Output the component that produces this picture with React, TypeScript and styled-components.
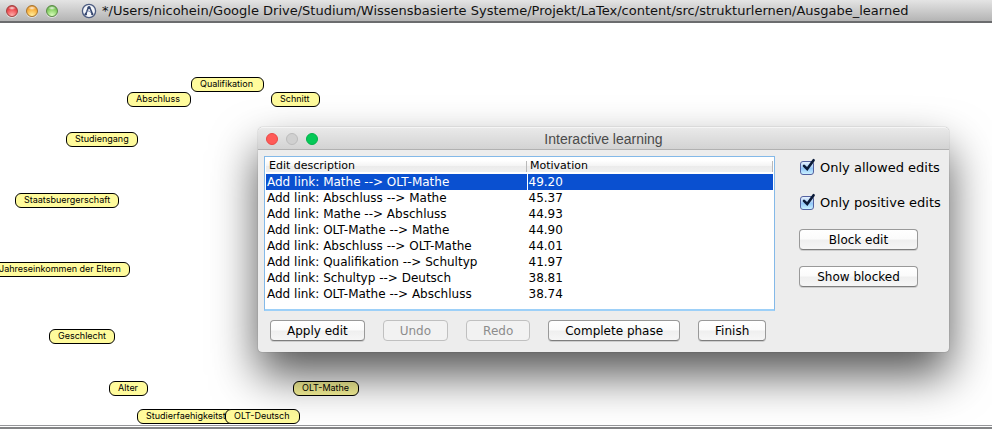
import React, { useState } from "react";
import styled, { createGlobalStyle } from "styled-components";

const uiFont = `"DejaVu Sans", Verdana, sans-serif`;

const GlobalStyle = createGlobalStyle`
  *, *::before, *::after { box-sizing: border-box; }
  body { margin: 0; background: #fff; color: #000; overflow: hidden; }
`;

const AppWindow = styled.div`
  position: relative;
  display: flex;
  flex-direction: column;
  height: 100vh;
  overflow: hidden;
`;

const TitleBar = styled.header`
  display: flex;
  align-items: center;
  flex: none;
  height: 23px;
  padding: 0 6px;
  border-bottom: 2px solid #6b6c6e;
  background: linear-gradient(#e4e4e4, #b4b4b4);
`;

const Lights = styled.div`
  display: flex;
  gap: 8px;
`;

const GlossyLight = styled.button<{ $rim: string; $top: string; $mid: string; $low: string }>`
  width: 12px;
  height: 12px;
  padding: 0;
  border: 1px solid ${(p) => p.$rim};
  border-radius: 50%;
  background:
    radial-gradient(ellipse 4px 2px at 50% 20%, #fffd, #fff0),
    radial-gradient(circle at 50% 95%, ${(p) => p.$low}, ${(p) => p.$mid} 60%, ${(p) => p.$top});
  box-shadow: 0 1px 0 #fff8;
`;

const FileIcon = styled.svg`
  flex: none;
  width: 16px;
  height: 16px;
  margin: 0 5px 0 23px;
`;

const FileTitle = styled.h1`
  margin: 0;
  font: 400 13px/20px ${uiFont};
  white-space: nowrap;
  color: #111;
`;

const Canvas = styled.main`
  position: relative;
  flex: 1;
  overflow: hidden;
  background: #fff;
`;

const Node = styled.div<{ $x: number; $y: number; $w: number }>`
  position: absolute;
  left: ${(p) => p.$x}px;
  top: ${(p) => p.$y}px;
  width: ${(p) => p.$w}px;
  height: 15px;
  padding-left: 8px;
  border: 1px solid #000;
  border-radius: 6px;
  background: #fffb9c;
  font: 400 9px/11px Inter, "Liberation Sans", sans-serif;
  white-space: nowrap;
`;

const BottomEdge = styled.footer`
  flex: none;
  height: 4px;
  border-top: 1px solid #96979a;
  border-bottom: 2px solid #838486;
  background: #fff;
`;

const Dialog = styled.section`
  position: absolute;
  left: 258px;
  top: 127px;
  width: 691px;
  border-radius: 5px 5px 4px 4px;
  background: #ededed;
  box-shadow: 0 0 1px #0008, 0 23px 46px #000a;
`;

const DialogBar = styled.header`
  display: grid;
  grid-template-columns: 1fr auto 1fr;
  align-items: center;
  height: 23px;
  padding: 0 8px;
  border-top: 1px solid #f5f5f5;
  border-bottom: 1px solid #b1b1b1;
  border-radius: 5px 5px 0 0;
  background: linear-gradient(#e9e9e9, #d3d3d3);
`;

const FlatLight = styled.button<{ $fill: string; $rim: string }>`
  width: 12px;
  height: 12px;
  padding: 0;
  border: 1px solid ${(p) => p.$rim};
  border-radius: 50%;
  background: ${(p) => p.$fill};
`;

const DialogTitle = styled.h2`
  margin: 0;
  font: 400 14px/20px "Liberation Sans", Arial, sans-serif;
  color: #4a4a4a;
`;

const DialogBody = styled.div`
  display: flex;
  gap: 24px;
  padding: 6px 6px 11px;
`;

const EditsColumn = styled.div`
  flex: 1;
`;

const TableFrame = styled.div`
  height: 155px;
  padding: 0 1px;
  border: 1px solid #84b9e8;
  border-bottom: 2px solid #9dd0f8;
  background: #fff;
`;

const EditsTable = styled.table`
  width: 100%;
  table-layout: fixed;
  border-collapse: collapse;
  cursor: default;
`;

const HeadCell = styled.th`
  height: 17px;
  padding: 0 3px;
  background:
    linear-gradient(#b9b9b9, #b9b9b9) right 0 bottom 2px / 1px 11px no-repeat,
    linear-gradient(#fff 20%, #f5f5f5 50%, #ebebeb 51%, #f0f0f0 90%, #fff 91%);
  font: 400 11px/16px ${uiFont};
  text-align: left;

  &:first-child { width: 261px; }
`;

const Row = styled.tr<{ $selected: boolean }>`
  background: ${(p) => (p.$selected ? "#0a50d0" : "transparent")};
  color: ${(p) => (p.$selected ? "#fff" : "#000")};
`;

const Cell = styled.td`
  height: 16px;
  padding: 0 1px;
  font: 400 12px/16px ${uiFont};
  white-space: nowrap;

  & + & { border-left: 1px solid #fff; }
`;

const Actions = styled.div`
  display: flex;
  gap: 18px;
  padding: 9px 6px 0;
`;

const PushButton = styled.button`
  height: 21px;
  padding: 1px 16px 0;
  border: 1px solid #999;
  border-bottom-color: #7d7d7d;
  border-radius: 4px;
  background: linear-gradient(#fff, #fbfbfb 48%, #efefef 52%, #f6f6f6);
  box-shadow: 0 1px 0 #0002;
  color: #000;
  font: 400 12px/18px ${uiFont};
  white-space: nowrap;

  &:disabled {
    border-color: #c0c0c0;
    background: #f2f2f2;
    box-shadow: none;
    color: #8c8c8c;
  }
`;

const OptionsColumn = styled.div`
  display: flex;
  flex-direction: column;
  width: 144px;
`;

const CheckLabel = styled.label`
  display: flex;
  align-items: center;
  gap: 6px;
  height: 20px;
  margin: 2px 0 13px;
  padding-left: 1px;
  font: 400 13px/20px ${uiFont};
  white-space: nowrap;
`;

const CheckWrap = styled.span`
  position: relative;
  display: flex;
`;

const CheckInput = styled.input`
  appearance: none;
  width: 14px;
  height: 14px;
  margin: 0;
  border: 1px solid #5361a0;
  border-radius: 3px;
  background: linear-gradient(#e6f1fd, #a9d0f8 45%, #8fc4f8 50%, #c9f0ff);

  &:not(:checked) + svg { display: none; }
`;

const Tick = styled.svg`
  position: absolute;
  left: 1px;
  top: -3px;
  width: 16px;
  height: 16px;
  pointer-events: none;
`;

const SideButtons = styled.div`
  display: flex;
  flex-direction: column;
  gap: 16px;
  width: 119px;
  margin-top: 3px;
`;

const nodes = [
  { label: "Abschluss", x: 127, y: 69, w: 64 },
  { label: "Qualifikation", x: 191, y: 54, w: 73 },
  { label: "Schnitt", x: 271, y: 69, w: 49 },
  { label: "Studiengang", x: 66, y: 109, w: 72 },
  { label: "Staatsbuergerschaft", x: 15, y: 170, w: 104 },
  { label: "Jahreseinkommen der Eltern", x: -10, y: 239, w: 140 },
  { label: "Geschlecht", x: 49, y: 306, w: 66 },
  { label: "Alter", x: 109, y: 358, w: 39 },
  { label: "Studierfaehigkeitst", x: 137, y: 386, w: 100 },
  { label: "OLT-Deutsch", x: 225, y: 386, w: 75 },
  { label: "OLT-Mathe", x: 293, y: 358, w: 66 },
];

const edits = [
  ["Add link: Mathe --> OLT-Mathe", "49.20"],
  ["Add link: Abschluss --> Mathe", "45.37"],
  ["Add link: Mathe --> Abschluss", "44.93"],
  ["Add link: OLT-Mathe --> Mathe", "44.90"],
  ["Add link: Abschluss --> OLT-Mathe", "44.01"],
  ["Add link: Qualifikation --> Schultyp", "41.97"],
  ["Add link: Schultyp --> Deutsch", "38.81"],
  ["Add link: OLT-Mathe --> Abschluss", "38.74"],
];

function CheckOption({ label }: { label: string }) {
  return (
    <CheckLabel>
      <CheckWrap>
        <CheckInput type="checkbox" defaultChecked />
        <Tick viewBox="0 0 16 16" aria-hidden="true">
          <path d="M3 7.8 L6.2 11 L12.6 2.2" fill="none" stroke="#0b1a38" strokeWidth="2.6" strokeLinecap="round" />
        </Tick>
      </CheckWrap>
      {label}
    </CheckLabel>
  );
}

export default function App() {
  const [selected, setSelected] = useState(0);

  return (
    <>
      <GlobalStyle />
      <AppWindow>
        <TitleBar>
          <Lights>
            <GlossyLight aria-label="Close" $rim="#a4413f" $top="#b3262b" $mid="#ee4b50" $low="#ffb0ae" />
            <GlossyLight aria-label="Minimize" $rim="#a9752c" $top="#cf7a1c" $mid="#f9b13d" $low="#fff0a0" />
            <GlossyLight aria-label="Zoom" $rim="#5b8a48" $top="#4a9a35" $mid="#86cf63" $low="#dcffc0" />
          </Lights>
          <FileIcon viewBox="0 0 16 16" aria-hidden="true">
            <circle cx="8" cy="8" r="6.6" fill="#f3f5f9" stroke="#4c5b80" strokeWidth="1.3" />
            <path d="M7.4 4.4 L4.6 11.6 M8 4 C9.6 5.4 10 8 11.6 11.4" fill="none" stroke="#34466f" strokeWidth="1.5" />
            <path d="M5.4 8.6 C7 7.6 8.6 7.8 10 9.6" fill="none" stroke="#7484a8" strokeWidth="1" />
            <circle cx="8" cy="4.4" r="1.5" fill="#34466f" />
            <circle cx="4.7" cy="11.2" r="1.2" fill="#34466f" />
            <circle cx="11.3" cy="11.2" r="1.1" fill="#34466f" />
          </FileIcon>
          <FileTitle>
            */Users/nicohein/Google Drive/Studium/Wissensbasierte Systeme/Projekt/LaTex/content/src/strukturlernen/Ausgabe_learned
          </FileTitle>
        </TitleBar>

        <Canvas>
          {nodes.map((n) => (
            <Node key={n.label} $x={n.x} $y={n.y} $w={n.w}>
              {n.label}
            </Node>
          ))}
        </Canvas>
        <BottomEdge />

        <Dialog role="dialog" aria-labelledby="dialog-title">
          <DialogBar>
            <Lights>
              <FlatLight aria-label="Close dialog" $fill="#ff5a57" $rim="#ea4845" />
              <FlatLight aria-label="Minimize dialog" disabled $fill="#d0d0d0" $rim="#bcbcbc" />
              <FlatLight aria-label="Zoom dialog" $fill="#04c957" $rim="#02b14a" />
            </Lights>
            <DialogTitle id="dialog-title">Interactive learning</DialogTitle>
          </DialogBar>
          <DialogBody>
            <EditsColumn>
              <TableFrame>
                <EditsTable>
                  <thead>
                    <tr>
                      <HeadCell scope="col">Edit description</HeadCell>
                      <HeadCell scope="col">Motivation</HeadCell>
                    </tr>
                  </thead>
                  <tbody>
                    {edits.map(([description, motivation], i) => (
                      <Row key={description} $selected={i === selected} onClick={() => setSelected(i)}>
                        <Cell>{description}</Cell>
                        <Cell>{motivation}</Cell>
                      </Row>
                    ))}
                  </tbody>
                </EditsTable>
              </TableFrame>
              <Actions>
                <PushButton>Apply edit</PushButton>
                <PushButton disabled>Undo</PushButton>
                <PushButton disabled>Redo</PushButton>
                <PushButton>Complete phase</PushButton>
                <PushButton>Finish</PushButton>
              </Actions>
            </EditsColumn>
            <OptionsColumn>
              <CheckOption label="Only allowed edits" />
              <CheckOption label="Only positive edits" />
              <SideButtons>
                <PushButton>Block edit</PushButton>
                <PushButton>Show blocked</PushButton>
              </SideButtons>
            </OptionsColumn>
          </DialogBody>
        </Dialog>
      </AppWindow>
    </>
  );
}
